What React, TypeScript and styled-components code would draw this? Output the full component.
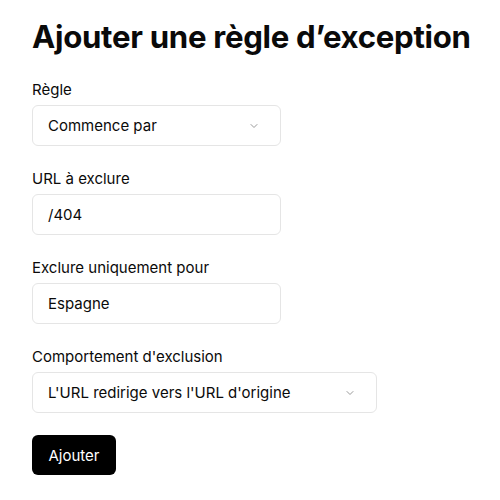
import React from "react";
import styled, { createGlobalStyle } from "styled-components";

const GlobalStyle = createGlobalStyle`
  body {
    margin: 0;
    background: #ffffff;
    font-family: Inter, "Noto Sans", sans-serif;
    color: #0a0a0a;
  }
`;

const Page = styled.main`
  padding: 14px 32px 0 32px;
`;

const Title = styled.h1`
  margin: 0;
  font-size: 31.2px;
  line-height: 46px;
  font-weight: 700;
  letter-spacing: -0.3px;
  white-space: nowrap;
`;

const Form = styled.form`
  display: flex;
  flex-direction: column;
  gap: 23px;
  margin-top: 20px;
`;

const Field = styled.div`
  display: flex;
  flex-direction: column;
  gap: 5px;
`;

const Label = styled.label`
  font-size: 15px;
  line-height: 20px;
  font-weight: 400;
`;

const Box = styled.div<{ $width: number }>`
  box-sizing: border-box;
  width: ${(p) => p.$width}px;
  height: 41px;
  border: 1px solid #e5e5e5;
  border-radius: 6px;
  padding: 0 20px 0 15px;
  display: flex;
  align-items: center;
  justify-content: space-between;
  font-size: 15px;
  font-weight: 400;
`;

const Chevron = styled.svg`
  width: 12px;
  height: 12px;
  color: #9a9a9a;
`;

const Button = styled.button`
  align-self: flex-start;
  margin-top: -1px;
  height: 40px;
  width: 84px;
  border: none;
  border-radius: 6px;
  background: #000000;
  color: #ffffff;
  font-family: inherit;
  font-size: 15px;
  font-weight: 400;
`;

const Arrow = () => (
  <Chevron viewBox="0 0 24 24" fill="none" stroke="currentColor" strokeWidth={2} strokeLinecap="round" strokeLinejoin="round">
    <path d="m6 9 6 6 6-6" />
  </Chevron>
);

type FieldDef = { label: string; value: string; width: number; select?: boolean };

const fields: FieldDef[] = [
  { label: "Règle", value: "Commence par", width: 249, select: true },
  { label: "URL à exclure", value: "/404", width: 249 },
  { label: "Exclure uniquement pour", value: "Espagne", width: 249 },
  { label: "Comportement d'exclusion", value: "L'URL redirige vers l'URL d'origine", width: 345, select: true },
];

export default function App() {
  return (
    <>
      <GlobalStyle />
      <Page>
        <Title>Ajouter une règle d’exception</Title>
        <Form onSubmit={(e) => e.preventDefault()}>
          {fields.map((f) => (
            <Field key={f.label}>
              <Label>{f.label}</Label>
              <Box $width={f.width}>
                <span>{f.value}</span>
                {f.select && <Arrow />}
              </Box>
            </Field>
          ))}
          <Button type="submit">Ajouter</Button>
        </Form>
      </Page>
    </>
  );
}
